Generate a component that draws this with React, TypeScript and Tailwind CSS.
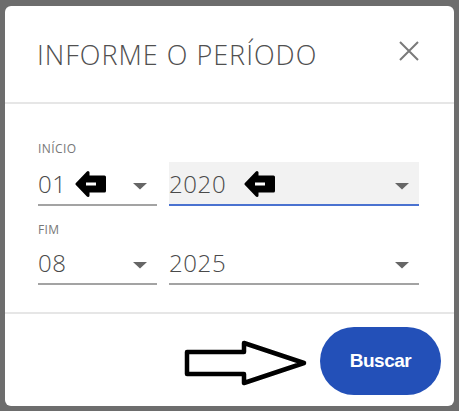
import React from 'react';

function PointLeft() {
  return (
    <svg width="32" height="28" viewBox="0 0 32 28" className="shrink-0">
      <path d="M2 14 L13 2.5 L13 7 L29.5 7 L29.5 21 L13 21 L13 25.5 Z" fill="#000" stroke="#000" strokeWidth="3" strokeLinejoin="round" />
      <rect x="11" y="12.5" width="10" height="3" fill="#fff" />
    </svg>
  );
}

function Caret() {
  return (
    <svg width="14" height="7" viewBox="0 0 14 7" className="ml-auto shrink-0 mr-[10px] mt-[6px]">
      <path d="M0 0 L14 0 L7 6.5 Z" fill="#666" />
    </svg>
  );
}

function Select({ value, width, focused, pointer }: { value: string; width: string; focused?: boolean; pointer?: boolean }) {
  return (
    <div
      className={`${width} h-[44px] flex items-center pt-[1px] ${
        focused ? 'bg-[#f2f2f2] border-b-2 border-[#4a72d0]' : 'border-b-2 border-[#a3a3a3]'
      }`}
    >
      <span className="text-[24px] font-light text-[#4a4a4a] leading-none tracking-[0.6px]">{value}</span>
      {pointer && <span className={focused ? 'ml-[18px] flex' : 'ml-[8px] flex'}><PointLeft /></span>}
      <Caret />
    </div>
  );
}

export default function App() {
  return (
    <div className="w-[459px] h-[411px] bg-[#6d6d6d] pt-[6px] pl-[5px] pr-[5px] overflow-hidden">
      <div className="w-[449px] h-[400px] bg-white rounded-[6px] flex flex-col" style={{ fontFamily: '"Open Sans", sans-serif' }}>
        <div className="h-[98px] flex items-center justify-between pl-[32px] pr-[34px] border-b-2 border-[#e6e6e6]">
          <h2 className="text-[27px] font-light text-[#505050] tracking-[1px] mt-[2px]">INFORME O PERÍODO</h2>
          <svg width="22" height="22" viewBox="0 0 22 22" className="mb-[6px]">
            <path d="M2 2 L20 20 M20 2 L2 20" stroke="#7a7a7a" strokeWidth="2" />
          </svg>
        </div>
        <div className="h-[210px] pl-[33px] pr-[35px] pt-[38px] border-b-2 border-[#e6e6e6]">
          <div className="text-[12px] leading-[14px] text-[#777] tracking-[0.4px]">INÍCIO</div>
          <div className="flex gap-[12px] mt-[6px]">
            <Select value="01" width="w-[119px]" pointer />
            <Select value="2020" width="w-[250px]" focused pointer />
          </div>
          <div className="text-[12px] leading-[14px] text-[#777] mt-[17px] tracking-[0.4px]">FIM</div>
          <div className="flex gap-[12px] mt-[4px]">
            <Select value="08" width="w-[119px]" />
            <Select value="2025" width="w-[250px]" />
          </div>
        </div>
        <div className="flex-1 flex items-center justify-end pr-[13px] pt-[2px] gap-[12px]">
          <svg width="124" height="46" viewBox="0 0 124 46" className="mt-[4px]">
            <path d="M3 12 L60 12 L60 3 L120 23 L60 43 L60 34 L3 34 Z" fill="#fff" stroke="#000" strokeWidth="4.5" strokeLinejoin="round" />
          </svg>
          <button className="w-[121px] h-[68px] rounded-full bg-[#2350b8] text-white text-[19px] font-bold tracking-[-0.5px]" style={{ fontFamily: '"Liberation Sans", Arial, sans-serif' }}>
            Buscar
          </button>
        </div>
      </div>
    </div>
  );
}
